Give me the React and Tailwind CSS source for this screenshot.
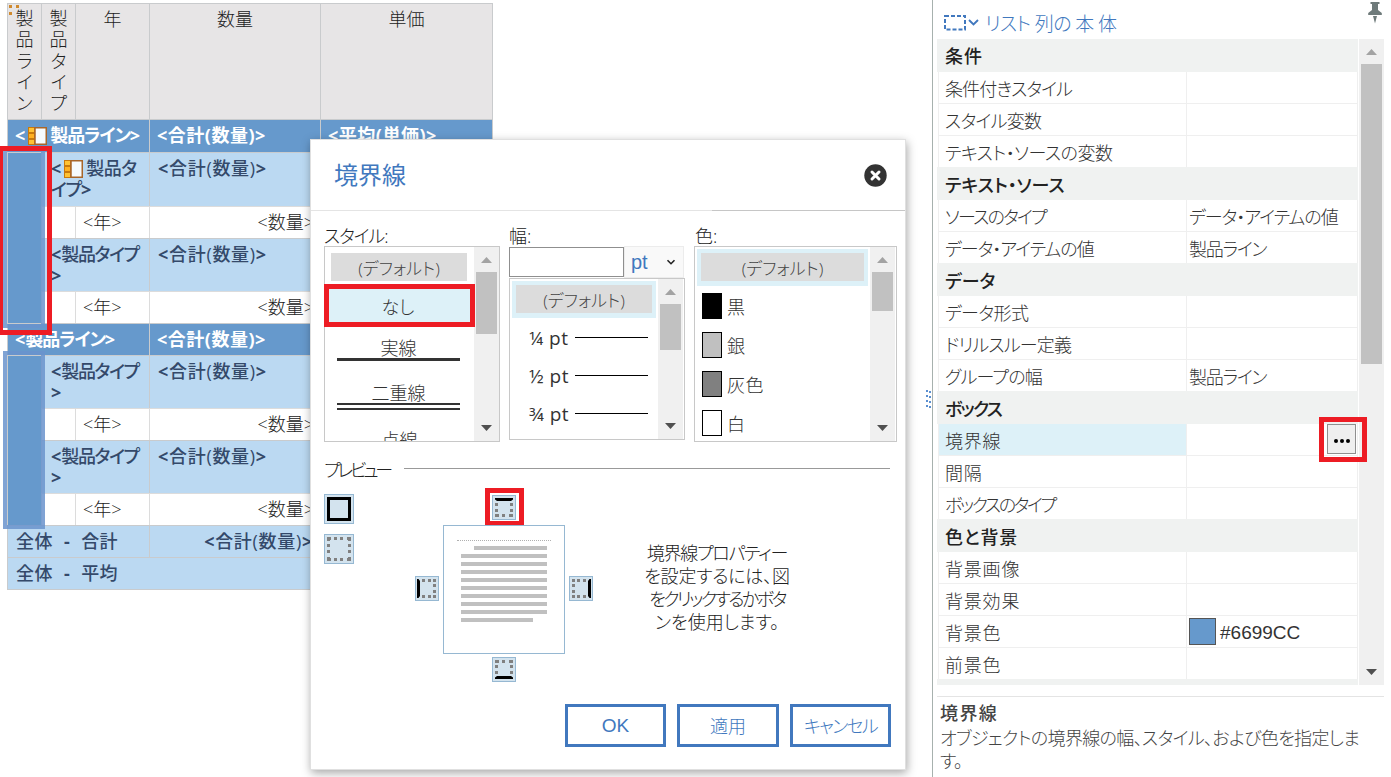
import React from 'react';
import clsx from 'clsx';

const TEXT = 'font-["Open_Sans","Noto_Sans_CJK_JP",sans-serif] [font-feature-settings:"palt"]';

/* ---------- report list ---------- */

function NodeIcon() {
  return (
    <svg width="19" height="18" viewBox="0 0 19 18" className="inline-block align-[-3px] ml-[3px] mr-[3px]">
      <rect x="0" y="0" width="7" height="18" fill="#c8790c" />
      <rect x="1" y="1" width="5" height="4" fill="#ffc233" />
      <rect x="1" y="7" width="5" height="4" fill="#ffb020" />
      <rect x="1" y="13" width="5" height="4" fill="#ffc233" />
      <rect x="7" y="0.75" width="11.25" height="16.5" fill="#f7fbfd" stroke="#a8662a" strokeWidth="1.5" />
    </svg>
  );
}

function Cell({ className, children }) {
  return (
    <div className={clsx('border-t border-l border-[#c9cbcd] pt-[5px] leading-[21px] overflow-hidden', className)}>
      {children}
    </div>
  );
}

function VerticalHead({ text }) {
  return (
    <Cell className="bg-[#e7e5e6] flex flex-col items-center pt-[4px] border-[#c0bebf] font-light">
      {text.split('').map((c, i) => (
        <span key={i} className="h-[21.3px] -mt-px mb-px">{c}</span>
      ))}
    </Cell>
  );
}

function Total() {
  return <span className="tracking-[0.7px]"><b>&lt;</b>合計(数量)<b>&gt;</b></span>;
}

function TypeRow({ icon }) {
  return (
    <>
      <Cell className="col-span-2 bg-[#bbd9f2] text-[#34496a] pl-[9px] font-medium">
        {icon ? (
          <><b>&lt;</b><NodeIcon /><span className="tracking-[-0.5px]">製品タ</span><br /><span className="tracking-[-1.2px]">イプ</span><b>&gt;</b></>
        ) : (
          <><b>&lt;</b><span className="tracking-[-1.3px]">製品タイプ</span><br /><b>&gt;</b></>
        )}
      </Cell>
      <Cell className="bg-[#bbd9f2] text-[#34496a] pl-2 font-medium"><Total /></Cell>
      <Cell className="bg-[#bbd9f2]" />
    </>
  );
}

function YearRow() {
  return (
    <>
      <Cell className="bg-white border-[#dcdcdc]" />
      <Cell className="bg-white border-[#dcdcdc] pl-[7px] font-light">&lt;年&gt;</Cell>
      <Cell className="bg-white border-[#dcdcdc] pr-[6px] text-right font-light">&lt;数量&gt;</Cell>
      <Cell className="bg-white border-[#dcdcdc]" />
    </>
  );
}

function LineGroup({ icon }) {
  return (
    <>
      <Cell className="col-span-3 bg-[#6699cc] text-white font-bold pl-[7px]">
        &lt;{icon && <NodeIcon />}<span className="tracking-[-1.1px]">製品ライン</span>&gt;
      </Cell>
      <Cell className="bg-[#6699cc] text-white font-bold pl-[7px] tracking-[0.5px]">&lt;合計(数量)&gt;</Cell>
      <Cell className="bg-[#6699cc] text-white font-bold pl-[7px] tracking-[0.5px]">&lt;平均(単価)&gt;</Cell>
      <Cell className="row-span-4 bg-[#6699cc]" />
      <TypeRow icon={icon} />
      <YearRow />
      <TypeRow />
      <YearRow />
    </>
  );
}

function ReportList() {
  return (
    <div className="relative ml-[7px] mt-[3px] w-[486px] h-[587px] shrink-0">
      <div className="grid w-[486px] h-[587px] border-r border-b border-[#c9cbcd] text-[18px] text-[#222] grid-cols-[34px_34px_74px_171px_172px] grid-rows-[116px_33px_54px_32px_53px_32px_32px_53px_32px_53px_32px_32px_32px]">
        <VerticalHead text="製品ライン" />
        <VerticalHead text="製品タイプ" />
        <Cell className="bg-[#e7e5e6] border-[#c0bebf] text-center font-light pt-[3px]">年</Cell>
        <Cell className="bg-[#e7e5e6] border-[#c0bebf] text-center font-light pt-[3px]">数量</Cell>
        <Cell className="bg-[#e7e5e6] border-[#c0bebf] text-center font-light pt-[3px]">単価</Cell>

        <LineGroup icon />
        <LineGroup />

        <Cell className="col-span-3 bg-[#bbd9f2] text-[#34496a] pl-2 font-medium tracking-[0.4px] [word-spacing:6px]">全体 <b>-</b> 合計</Cell>
        <Cell className="bg-[#bbd9f2] text-[#34496a] text-right pr-[7px] font-medium"><Total /></Cell>
        <Cell className="bg-[#bbd9f2]" />
        <Cell className="col-span-5 bg-[#bbd9f2] text-[#34496a] pl-2 font-medium tracking-[0.4px] [word-spacing:6px]">全体 <b>-</b> 平均</Cell>
      </div>

      {/* handle dots in the list corner */}
      <svg className="absolute left-[2px] top-[2px]" width="14" height="14">
        <rect x="0" y="0" width="3" height="3" fill="#d08a2e" />
        <rect x="7" y="0" width="3" height="3" fill="#d08a2e" />
        <rect x="0" y="7" width="3" height="3" fill="#d08a2e" />
      </svg>

      {/* selection frames */}
      <div className="absolute -left-[4px] top-[145px] w-[42px] h-[180px] border-4 border-[#6a93cd]/85" />
      <div className="absolute -left-[4px] top-[348px] w-[42px] h-[178px] border-4 border-[#6a93cd]/85" />
      <div className="absolute -left-[9px] top-[143px] w-[54px] h-[189px] border-5 border-[#ed1c24]" />
    </div>
  );
}

/* ---------- dialog ---------- */

function Arrow({ up }) {
  return (
    <svg width="11" height="6" viewBox="0 0 11 6" className="shrink-0">
      {up ? <path d="M0 6L5.5 0L11 6Z" fill="#a3a3a3" /> : <path d="M0 0L5.5 6L11 0Z" fill="#505050" />}
    </svg>
  );
}

function Scrollbar({ thumb }) {
  return (
    <div className="w-[25px] shrink-0 h-full bg-[#f0f0f0] flex flex-col items-center">
      <div className="h-[25px] flex items-center pt-[1px]"><Arrow up /></div>
      <div className={clsx('w-[21px] bg-[#c1c1c1]', thumb)} />
      <div className="flex-1" />
      <div className="h-[23px] flex items-center pb-[3px]"><Arrow /></div>
    </div>
  );
}

function DefaultItem() {
  return (
    <div className="h-[28px] bg-[#dcdcdc] text-center leading-[31px] text-[17px] text-[#444] font-light">(デフォルト)</div>
  );
}

function StyleList() {
  return (
    <div className="relative flex w-[176px] h-[196px] border border-[#c8c8c8]">
      <div className="flex-1 h-full overflow-hidden text-center text-[18px] text-[#333] font-light">
        <div className="pl-[6px] pr-[7px] pt-[6px] pb-[3px]"><DefaultItem /></div>
        <div className="h-[43px] bg-[#ddf1f8] pt-[8px] pr-[3px] leading-[31px]">なし</div>
        <div className="mt-[10px] ml-3 mr-[14px] h-[24px] border-b-3 border-[#333] leading-[22px]">実線</div>
        <div className="mt-[21px] ml-3 mr-[14px] h-[28px] border-b-7 border-double border-[#333] leading-[22px]">二重線</div>
        <div className="mt-[19px] leading-[22px]">点線</div>
      </div>
      <Scrollbar thumb="h-[62px]" />
      <div className="absolute -left-px top-[37px] w-[151px] h-[43px] border-5 border-[#ed1c24]" />
    </div>
  );
}

function WidthList() {
  return (
    <div className="w-[176px]">
      <div className="flex h-[32px]">
        <div className="mt-[1px] w-[115px] h-[30px] border border-[#8f8f8f] bg-white" />
        <div className="w-[60px] h-[32px] border border-[#ececec] bg-[#f9f9f9] flex items-center pl-[6px] font-['Liberation_Sans',sans-serif] text-[20px] text-[#4178be]">
          pt
          <svg className="ml-[18px]" width="10" height="7" viewBox="0 0 10 7" fill="none">
            <path d="M1.5 1.2L5 4.7L8.5 1.2" stroke="#222" strokeWidth="1.6" />
          </svg>
        </div>
      </div>
      <div className="flex h-[162px] border border-[#c8c8c8] pr-[1px]">
        <div className="flex-1 h-full overflow-hidden">
          <div className="m-[2px] mb-px p-1 pb-[5px] h-[37px] bg-[#ddf1f8]"><DefaultItem /></div>
          {['¼', '½', '¾'].map((w) => (
            <div key={w} className="flex items-center h-[38px] pl-[19px] pr-[10px] text-[19px] text-[#333] font-normal">
              <span className="w-[46px] whitespace-pre tracking-[0.5px]">{w} pt</span>
              <div className="flex-1 h-px bg-black mb-[2px]" />
            </div>
          ))}
        </div>
        <Scrollbar thumb="h-[46px]" />
      </div>
    </div>
  );
}

const COLORS = [
  { name: '黒', swatch: 'bg-black' },
  { name: '銀', swatch: 'bg-[#c0c0c0]' },
  { name: '灰色', swatch: 'bg-[#808080]' },
  { name: '白', swatch: 'bg-white' },
];

function ColorList() {
  return (
    <div className="flex w-[203px] h-[196px] border border-[#c8c8c8] pr-[1px]">
      <div className="flex-1 h-full overflow-hidden">
        <div className="m-[2px] mb-0 p-1 pb-[5px] h-[37px] bg-[#ddf1f8]"><DefaultItem /></div>
        {COLORS.map((c) => (
          <div key={c.name} className="flex items-center h-[39px] pl-[7px] gap-[5px] text-[18px] tracking-[0.5px] text-[#333] font-light">
            <div className={clsx('w-5 h-[26px] border border-black', c.swatch)} />
            <span className="pt-[3px]">{c.name}</span>
          </div>
        ))}
      </div>
      <Scrollbar thumb="h-[39px]" />
    </div>
  );
}

// small edge button, the solid bar shows which edge it toggles
function EdgeButton({ edge }) {
  const horizontal = edge === 'top' || edge === 'bottom';
  const flip = {
    top: undefined,
    bottom: 'matrix(1 0 0 -1 0 23)',
    left: undefined,
    right: 'matrix(-1 0 0 1 22 0)',
  }[edge];
  return (
    <div className="w-[24px] h-[25px] shrink-0 border border-[#96b8d2] bg-[#d3e3ee]">
      <svg width="22" height="23" viewBox="0 0 22 23" fill="#808080">
        <g transform={flip}>
          {horizontal ? (
            <>
              <path d="M2 2H20V3.5L18 5H4L2 3.5Z" fill="#000" />
              <path d="M2 7h3v3h-3zM17 7h3v3h-3zM2 13h3v3h-3zM17 13h3v3h-3zM2 18h4v3h-4zM9 18h3v3h-3zM16 18h4v3h-4z" />
            </>
          ) : (
            <>
              <path d="M1 2H2.5L4 4V19L2.5 21H1Z" fill="#000" />
              <path d="M6 2h3v3h-3zM12 2h3v3h-3zM17 2h3v3h-3zM17 7h3v3h-3zM17 13h3v3h-3zM6 18h3v3h-3zM12 18h3v3h-3zM17 18h3v3h-3z" />
            </>
          )}
        </g>
      </svg>
    </div>
  );
}

function AllBorders() {
  return (
    <div className="w-[30px] h-[30px] border border-[#96b8d2] bg-[#d3e3ee] p-[2px]">
      <div className="w-6 h-6 border-3 border-black" />
    </div>
  );
}

function NoBorders() {
  return (
    <div className="w-[30px] h-[30px] border border-[#96b8d2] bg-[#d3e3ee]">
      <svg width="28" height="28" fill="#808080">
        <path d="M2 2h4v3h-1v1h-3zM9 2h3v3h-3zM15 2h3v3h-3zM22 2h4v4h-3v-1h-1z" />
        <path d="M2 9h3v3h-3zM2 15h3v3h-3zM23 9h3v3h-3zM23 15h3v3h-3z" />
        <path d="M2 22h3v1h1v3h-4zM9 23h3v3h-3zM15 23h3v3h-3zM23 22h3v4h-4v-3h1z" />
      </svg>
    </div>
  );
}

function PagePreview() {
  return (
    <div className="w-[122px] h-[129px] border border-[#96b8d2] bg-white pt-[14px]">
      <div className="ml-[13px] w-[94px] border-t border-dotted border-[#b0b0b0]" />
      <div className="ml-[17px] mt-[5px] flex flex-col gap-1 w-[86px]">
        <div className="h-1 bg-[#c0c0c0] ml-[13px]" />
        {Array.from({ length: 8 }).map((_, i) => <div key={i} className="h-1 bg-[#c0c0c0]" />)}
        <div className="h-1 w-[72px] bg-[#c0c0c0]" />
      </div>
    </div>
  );
}

function Button({ className, children }) {
  return (
    <button className={clsx('h-[43px] border-3 border-[#4178be] bg-white text-[#4178be] pt-px', className)}>
      {children}
    </button>
  );
}

function BorderDialog() {
  return (
    <div className="absolute left-[310px] top-[139px] w-[596px] h-[631px] bg-white border border-[#e0e0e0] shadow-[1px_3px_9px_rgba(0,0,0,0.35)]">
      <div className="flex h-[71px] border-b border-[#e4e4e4] pl-[23px] pr-[18px] justify-between items-center">
        <h2 className="text-[24px] text-[#4178be] font-normal">境界線</h2>
        <svg width="23" height="23" viewBox="0 0 23 23">
          <circle cx="11.5" cy="11.5" r="11.2" fill="#333" />
          <path d="M8 8L15 15M15 8L8 15" stroke="#fff" strokeWidth="3" strokeLinecap="round" />
        </svg>
      </div>
      <div className="-mt-px ml-[401px] h-px bg-[#c6c6c6]" />

      <div className="flex pl-[13px] pt-[12px] text-[18px] text-[#222] font-light">
        <div className="w-[185px]">
          <div className="h-[23px] leading-[26px] tracking-[-1.1px]">スタイル:</div>
          <StyleList />
        </div>
        <div className="w-[185px]">
          <div className="h-[23px] leading-[26px]">幅:</div>
          <WidthList />
        </div>
        <div>
          <div className="h-[23px] leading-[26px] pl-px">色:</div>
          <ColorList />
        </div>
      </div>

      <div className="flex items-center h-[20px] mt-[18px] pl-[13px] pr-[15px] text-[18px] text-[#222] font-light">
        <span className="w-[80px] tracking-[-3.2px] whitespace-nowrap">プレビュー</span>
        <div className="flex-1 h-px bg-[#999] mb-[3px]" />
      </div>

      <div className="flex pl-[13px]">
        <div className="flex flex-col gap-[10px] pt-[14px]">
          <AllBorders />
          <NoBorders />
        </div>
        <div className="ml-[61px] mt-[8px] w-[178px] flex flex-col items-center">
          <div className="h-[38px] w-[39px] border-5 border-[#ed1c24] flex items-start justify-center pt-[2px]">
            <EdgeButton edge="top" />
          </div>
          <div className="flex items-start gap-[4px] -mt-px">
            <div className="mt-[51px]"><EdgeButton edge="left" /></div>
            <PagePreview />
            <div className="mt-[51px]"><EdgeButton edge="right" /></div>
          </div>
          <div className="mt-[3px]"><EdgeButton edge="bottom" /></div>
        </div>
        <div className="ml-[46px] mt-[62px] w-[156px] text-center text-[18px] leading-[23px] text-[#222] font-light whitespace-nowrap">
          <p className="tracking-[-1.3px]">境界線プロパティー</p>
          <p className="tracking-[-0.2px]">を設定するには、図</p>
          <p className="tracking-[-2.5px]">をクリックするかボタ</p>
          <p>ンを使用します。</p>
        </div>
      </div>

      <div className="flex justify-end gap-[11px] pr-[14px] mt-[22px] text-[18px]">
        <Button className="w-[101px] font-['Liberation_Sans',sans-serif] text-[19px]">OK</Button>
        <Button className="w-[102px] font-light">適用</Button>
        <Button className="w-[101px] font-light tracking-[-1.7px]">キャンセル</Button>
      </div>
    </div>
  );
}

/* ---------- properties pane ---------- */

const PROPS = [
  { section: '条件', track: 'tracking-[1px]' },
  { name: '条件付きスタイル', track: 'tracking-[-0.9px]' },
  { name: 'スタイル変数', track: 'tracking-[-0.7px]' },
  { name: 'テキスト・ソースの変数', track: 'tracking-[-0.5px]' },
  { section: 'テキスト・ソース' },
  { name: 'ソースのタイプ', track: 'tracking-[-1.8px]', value: 'データ・アイテムの値', valueTrack: 'tracking-[-1px]' },
  { name: 'データ・アイテムの値', track: 'tracking-[-1px]', value: '製品ライン', valueTrack: 'tracking-[-1.2px]' },
  { section: 'データ' },
  { name: 'データ形式', track: 'tracking-[-0.6px]' },
  { name: 'ドリルスルー定義', track: 'tracking-[-0.8px]' },
  { name: 'グループの幅', track: 'tracking-[-0.8px]', value: '製品ライン', valueTrack: 'tracking-[-1.2px]' },
  { section: 'ボックス', track: 'tracking-[-1.8px]' },
  { name: '境界線', track: 'tracking-[0.8px]', selected: true },
  { name: '間隔', track: 'tracking-[0.8px]' },
  { name: 'ボックスのタイプ', track: 'tracking-[-2.4px]' },
  { section: '色と背景', track: 'tracking-[0.8px]' },
  { name: '背景画像', track: 'tracking-[0.8px]' },
  { name: '背景効果', track: 'tracking-[0.8px]' },
  { name: '背景色', track: 'tracking-[0.8px]', color: '#6699CC' },
  { name: '前景色', track: 'tracking-[0.8px]' },
];

function PropRow({ row }) {
  if (row.section) {
    return (
      <div className={clsx('h-[33px] -mt-px first:mt-0 shrink-0 bg-[#f0f2f1] pl-[8px] leading-[37px] first:leading-[35px] font-medium text-[#222]', row.track)}>
        {row.section}
      </div>
    );
  }
  return (
    <div className="flex h-8 shrink-0 border-b border-l border-r border-[#efefef] ml-[1px] text-[#333] font-light leading-[34px]">
      <div className={clsx('w-[247px] pl-[6px] whitespace-nowrap', row.track, row.selected && 'bg-[#ddf1f8]')}>{row.name}</div>
      <div className="flex-1 border-l border-[#efefef] pl-[2px] flex">
        <span className={row.valueTrack}>{row.value}</span>
        {row.color && (
          <>
            <div className="mt-[2px] w-[27px] h-[27px] bg-[#6699cc] border border-[#555]" />
            <span className="ml-[4px] font-['Liberation_Sans',sans-serif] text-[19px] leading-[33px] font-normal">{row.color}</span>
          </>
        )}
      </div>
    </div>
  );
}

function PropertiesPane() {
  return (
    <div className="w-[459px] h-full shrink-0 border-l border-[#a7b1ae] bg-white pl-[4px]">
      <div className="flex h-[39px] justify-between">
        <div className="flex pl-[7px] pt-[7px] text-[19px] text-[#4178be] font-light">
          <svg className="mt-[8px]" width="36" height="16" viewBox="0 0 36 16" fill="none" stroke="#4178be">
            <rect x="1" y="1" width="20" height="13.5" strokeWidth="2" strokeDasharray="4 2" />
            <path d="M25 5L29.5 9.5L34 5" strokeWidth="1.9" />
          </svg>
          <span className="ml-[5px] leading-[34px] tracking-[-0.6px]">リスト 列の 本 体</span>
        </div>
        <svg className="mr-[9px] mt-[2px]" width="14" height="22" viewBox="0 0 14 22" fill="#6f7b7b">
          <path d="M2.5 0H11.5V2H10V8L13.8 11V13H0.2V11L4 8V2H2.5Z" />
          <path d="M5 14H9L7 21.5Z" />
        </svg>
      </div>
      <div className="relative flex h-[646px] w-[447px]">
        <div className="w-[421px] h-full overflow-hidden flex flex-col text-[18px]">
          {PROPS.map((row, i) => <PropRow key={i} row={row} />)}
          <div className="h-8 -mt-px shrink-0 bg-[#f0f2f1]" />
        </div>
        <div className="ml-[1px]"><Scrollbar thumb="h-[300px]" /></div>

        {/* edit button of the selected property */}
        <div className="absolute left-[382px] top-[378px] w-[48px] h-[45px] border-5 border-[#ed1c24] pl-[3px] pt-[2px]">
          <div className="w-[29px] h-[30px] border border-[#8f8f8f] bg-[#efefef] flex items-center justify-center gap-[2px] pt-[4px]">
            <i className="w-1 h-1 rounded-full bg-black" />
            <i className="w-1 h-1 rounded-full bg-black" />
            <i className="w-1 h-1 rounded-full bg-black" />
          </div>
        </div>
      </div>
      <div className="mt-[11px] w-[447px] border-t border-[#e4e4e4] pl-[3px] pt-[4px] text-[18px] text-[#444] leading-[23px]">
        <div className="font-medium h-[26px] leading-[25px] tracking-[1.4px]">境界線</div>
        <p className="font-light whitespace-nowrap tracking-[-0.65px]">オブジェクトの境界線の幅、スタイル、および色を指定しま<br />す。</p>
      </div>
    </div>
  );
}

function Splitter() {
  return (
    <div className="w-[6px] h-full pt-[389px]">
      <svg width="6" height="20" viewBox="0 0 6 20" fill="#5b8fd0">
        {[1, 6, 11, 16].map((y) => (
          <g key={y}>
            <rect x="0" y={y} width="2" height="2" />
            <rect x="3" y={y + 1} width="2" height="2" />
          </g>
        ))}
      </svg>
    </div>
  );
}

export default function App() {
  return (
    <div className={clsx('relative flex w-[1391px] h-[777px] bg-white overflow-hidden', TEXT)}>
      <div className="flex-1 flex items-start">
        <ReportList />
      </div>
      <Splitter />
      <PropertiesPane />
      <BorderDialog />
    </div>
  );
}
